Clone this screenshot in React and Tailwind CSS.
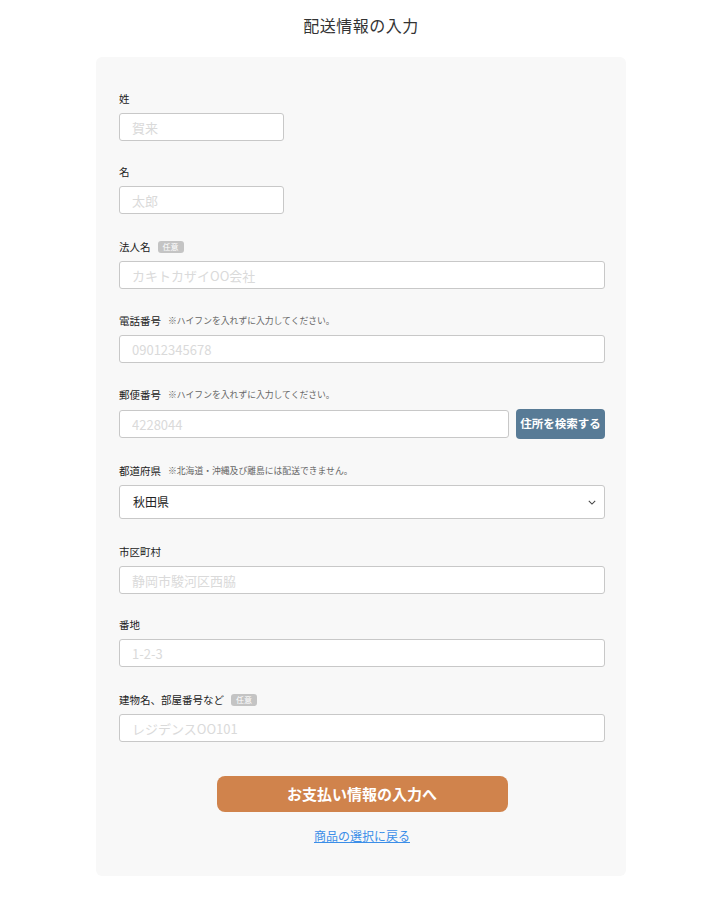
const font = { fontFamily: '"Noto Sans CJK JP", "Noto Sans", sans-serif' };

const Optional = () => (
  <span className="ml-[7px] inline-flex h-[12px] items-center rounded-[3px] bg-[#c4c4c4] px-[5px] text-[8px] leading-none text-white">
    任意
  </span>
);

// pb is padding (not margin) so spacing between fields does not collapse
const Field = ({ label, hint, optional, pb = "pb-[22px]", children }) => (
  <div className={pb}>
    <div className="mb-[5px] flex h-[18px] items-center">
      <span className="text-[10.5px] text-[#222]">{label}</span>
      {optional && <Optional />}
      {hint && <span className="ml-[7px] text-[8.8px] text-[#666]">{hint}</span>}
    </div>
    {children}
  </div>
);

const inputClass =
  "h-[28px] rounded-[3px] border border-[#c8c8c8] bg-white px-[12px] text-[13px] text-[#333] outline-none placeholder:text-[#dadada]";

const App = () => {
  return (
    <div className="min-h-[907px] bg-white pl-[16px]" style={font}>
      <h1 className="pt-[13px] pb-[19px] text-center text-[16px] leading-[25px] tracking-[0.5px] text-[#333]">
        配送情報の入力
      </h1>

      <div className="mx-auto w-[530px] rounded-[6px] bg-[#f8f8f8] pl-[23px] pr-[21px] pt-[33px] pb-[31px]">
        <Field label="姓">
          <input className={`${inputClass} w-[165px]`} placeholder="賀来" />
        </Field>

        <Field label="名" pb="pb-[24px]">
          <input className={`${inputClass} w-[165px]`} placeholder="太郎" />
        </Field>

        <Field label="法人名" optional pb="pb-[23px]">
          <input className={`${inputClass} w-full`} placeholder="カキトカザイOO会社" />
        </Field>

        <Field label="電話番号" hint="※ハイフンを入れずに入力してください。" pb="pb-[23px]">
          <input className={`${inputClass} w-full`} placeholder="09012345678" />
        </Field>

        <Field label="郵便番号" hint="※ハイフンを入れずに入力してください。" pb="pb-[23px]">
          <div className="flex h-[30px] items-center gap-[7px]">
            <input className={`${inputClass} min-w-0 flex-1`} placeholder="4228044" />
            <button className="h-[30px] w-[89px] shrink-0 rounded-[4px] bg-[#587b96] text-[11.5px] font-bold text-white">
              住所を検索する
            </button>
          </div>
        </Field>

        <Field label="都道府県" hint="※北海道・沖縄及び離島には配送できません。" pb="pb-[24px]">
          <div className="relative w-full">
            <select
              className="h-[34px] w-full appearance-none rounded-[3px] border border-[#c8c8c8] bg-white px-[13px] text-[12px] text-[#222] outline-none"
              defaultValue="秋田県"
            >
              <option>秋田県</option>
            </select>
            <svg
              className="pointer-events-none absolute right-[9px] top-[15px] h-[5px] w-[8px]"
              viewBox="0 0 10 6"
              fill="none"
              stroke="#444"
              strokeWidth="1.3"
            >
              <path d="M1 1l4 4 4-4" />
            </svg>
          </div>
        </Field>

        <Field label="市区町村">
          <input className={`${inputClass} w-full`} placeholder="静岡市駿河区西脇" />
        </Field>

        <Field label="番地" pb="pb-[24px]">
          <input className={`${inputClass} w-full`} placeholder="1-2-3" />
        </Field>

        <Field label="建物名、部屋番号など" optional pb="pb-0">
          <input className={`${inputClass} w-full`} placeholder="レジデンスOO101" />
        </Field>

        <div className="mt-[34px] flex flex-col items-center">
          <button className="h-[36px] w-[291px] rounded-[8px] bg-[#d0834c] text-[15px] font-bold text-white">
            お支払い情報の入力へ
          </button>
          <a href="#" className="mt-[15px] text-[12px] leading-[18px] text-[#3b8ee8] underline">
            商品の選択に戻る
          </a>
        </div>
      </div>
    </div>
  );
};

export default App;
